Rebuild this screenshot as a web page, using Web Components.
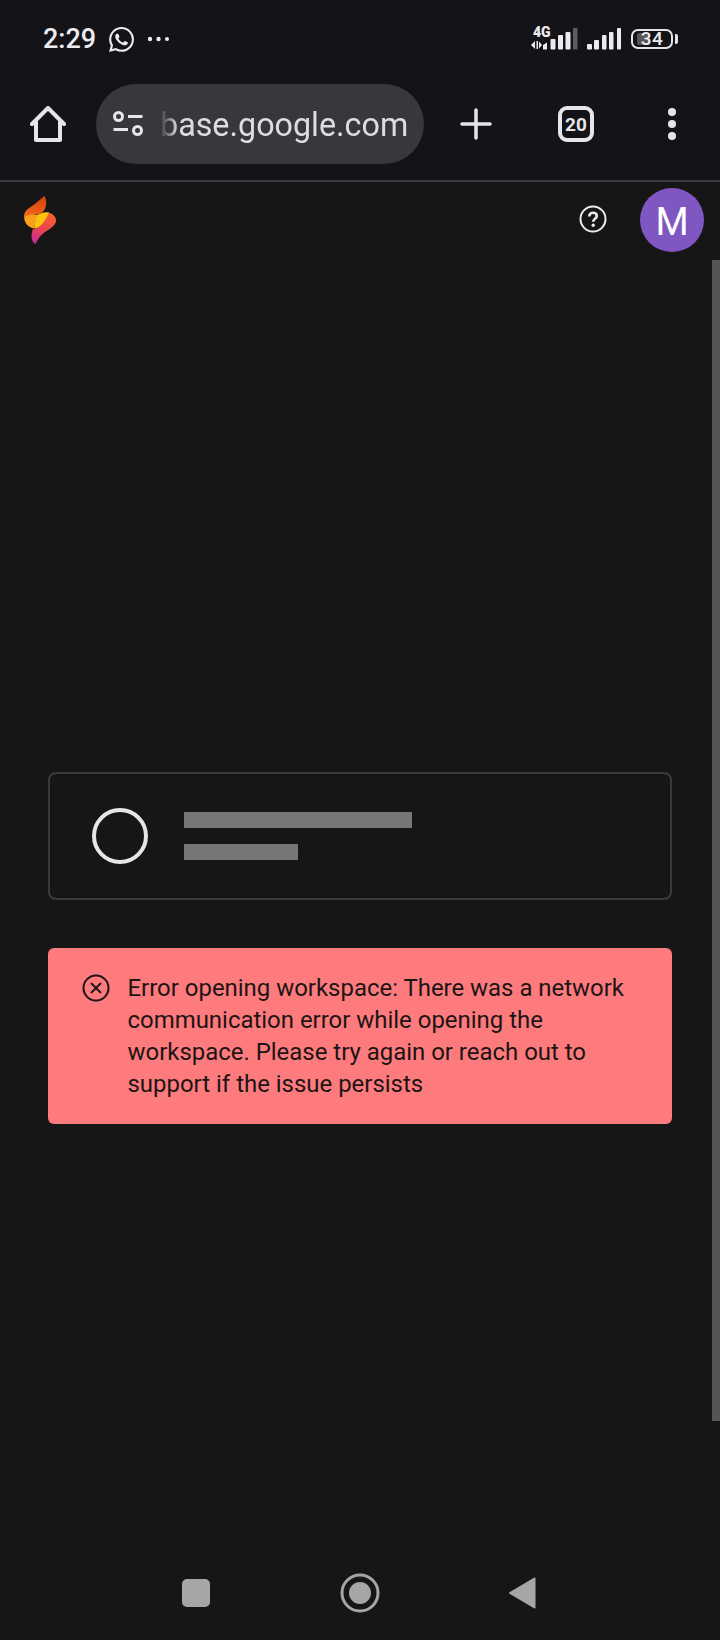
<!DOCTYPE html>
<html>
<head>
<meta charset="utf-8">
<title>Workspace</title>
<style>
  html, body { margin: 0; padding: 0; background: #161616; }
  body { font-family: Roboto, "Liberation Sans", sans-serif; }
</style>
</head>
<body>
<phone-shell>
  <status-bar slot="top"></status-bar>
  <browser-toolbar slot="top" url="base.google.com" tabs="20"></browser-toolbar>
  <app-header initial="M"></app-header>
  <workspace-page>
    <loading-card></loading-card>
    <error-banner>Error opening workspace: There was a network communication error while opening the workspace. Please try again or reach out to support if the issue persists</error-banner>
  </workspace-page>
  <nav-bar slot="bottom"></nav-bar>
</phone-shell>

<script>
class PhoneShell extends HTMLElement {
  constructor() {
    super()
    this.attachShadow({ mode: 'open' })
    this.shadowRoot.innerHTML = `
      <style>
        :host {
          display: flex;
          flex-direction: column;
          width: 720px;
          height: 1640px;
          overflow: hidden;
          position: relative;
          background: #161616;
        }
        main { flex: 1; display: flex; flex-direction: column; min-height: 0; }
        .scroll {
          position: absolute;
          right: 0;
          top: 260px;
          width: 8px;
          height: 1161px;
          background: #555;
        }
      </style>
      <slot name="top"></slot>
      <main><slot></slot></main>
      <slot name="bottom"></slot>
      <div class="scroll"></div>
    `
  }
}

class StatusBar extends HTMLElement {
  constructor() {
    super()
    this.attachShadow({ mode: 'open' })
    this.shadowRoot.innerHTML = `
      <style>
        :host {
          display: flex;
          align-items: center;
          height: 78px;
          padding: 0 43px;
          background: #131318;
          color: #ececf0;
          box-sizing: border-box;
        }
        .time { font-size: 27px; font-weight: 500; width: 66px; white-space: nowrap; }
        .wa { width: 25px; height: 25px; display: block; }
        .more { width: 22px; height: 6px; margin-left: 13px; display: block; }
        .right { margin-left: auto; display: flex; align-items: center; margin-right: -1px; }
        .signal { width: 92px; height: 34px; display: block; }
        .batt {
          margin-left: 10px;
          width: 42px;
          height: 20px;
          box-sizing: border-box;
          border: 2px solid #e4e4e8;
          border-radius: 7px;
          display: flex;
          align-items: center;
          justify-content: center;
          position: relative;
          font-size: 19px;
          font-weight: 500;
          line-height: 16px;
        }
        .batt i {
          position: absolute;
          left: 4px;
          top: 2px;
          width: 13px;
          height: 12px;
          border-radius: 2px;
          background: #55555a;
        }
        .batt span { position: relative; letter-spacing: .5px; }
        .nub { width: 3px; height: 10px; margin-left: 2px; background: #e4e4e8; border-radius: 0 2px 2px 0; }
      </style>
      <span class="time">2:29</span>
      <svg class="wa" viewBox="0 0 24 24" fill="#ececf0"><path d="M17.472 14.382c-.297-.149-1.758-.867-2.03-.967-.273-.099-.471-.148-.67.15-.197.297-.767.966-.94 1.164-.173.199-.347.223-.644.075-.297-.15-1.255-.463-2.39-1.475-.883-.788-1.48-1.761-1.653-2.059-.173-.297-.018-.458.13-.606.134-.133.298-.347.446-.52.149-.174.198-.298.298-.497.099-.198.05-.371-.025-.52-.075-.149-.669-1.612-.916-2.207-.242-.579-.487-.5-.669-.51-.173-.008-.371-.01-.57-.01-.198 0-.52.074-.792.372-.272.297-1.04 1.016-1.04 2.479 0 1.462 1.065 2.875 1.213 3.074.149.198 2.096 3.2 5.077 4.487.709.306 1.262.489 1.694.625.712.227 1.36.195 1.871.118.571-.085 1.758-.719 2.006-1.413.248-.694.248-1.289.173-1.413-.074-.124-.272-.198-.57-.347m-5.421 7.403h-.004a9.87 9.87 0 01-5.031-1.378l-.361-.214-3.741.982.998-3.648-.235-.374a9.86 9.86 0 01-1.51-5.26c.001-5.45 4.436-9.884 9.888-9.884 2.64 0 5.122 1.03 6.988 2.898a9.825 9.825 0 012.893 6.994c-.003 5.45-4.437 9.884-9.885 9.884m8.413-18.297A11.815 11.815 0 0012.05 0C5.495 0 .16 5.335.157 11.892c0 2.096.547 4.142 1.588 5.945L.057 24l6.305-1.654a11.882 11.882 0 005.683 1.448h.005c6.554 0 11.89-5.335 11.893-11.893a11.821 11.821 0 00-3.48-8.413z"/></svg>
      <svg class="more" viewBox="0 0 22 6" fill="#ececf0"><circle cx="3" cy="3" r="2.2"/><circle cx="11.5" cy="3" r="2.2"/><circle cx="20" cy="3" r="2"/></svg>
      <div class="right">
        <svg class="signal" viewBox="0 -4 92 34" fill="#ececf0">
          <text x="4" y="10.500" font-family="Roboto" font-weight="900" font-size="14">4G</text>
          <path d="M2 19l4-4v8zM7.500 15h1.500v8H7.500zM10 15.500l3 3.500-3 3.500z"/>
          <g>
            <path d="M14 19l4-2.500v7h-4z"/>
            <rect x="21.500" y="13" width="5" height="10.500" rx="1"/>
            <rect x="29" y="9" width="5" height="14.500" rx="1"/>
            <rect x="36.500" y="6" width="5" height="17.500" rx="1"/>
            <rect x="44" y="2" width="4.500" height="21.500" fill="#5d5d60"/>
            <rect x="58" y="18" width="5" height="5.500" rx="1"/>
            <rect x="65" y="14" width="5" height="9.500" rx="1"/>
            <rect x="73" y="9" width="4.500" height="14.500" rx="1"/>
            <rect x="80" y="6" width="4.500" height="17.500" rx="1"/>
            <rect x="88" y="2" width="4" height="21.500" rx="1"/>
          </g>
        </svg>
        <div class="batt"><i></i><span>34</span></div>
        <div class="nub"></div>
      </div>
    `
  }
}

class BrowserToolbar extends HTMLElement {
  constructor() {
    super()
    this.attachShadow({ mode: 'open' })
    this.shadowRoot.innerHTML = `
      <style>
        :host {
          display: flex;
          align-items: center;
          box-sizing: border-box;
          height: 104px;
          padding: 6px 0 16px 30px;
          background: #131318;
          border-bottom: 2px solid #3a3a40;
          color: #e6e6ea;
        }
        svg { display: block; flex: none; }
        .pill {
          margin-left: 30px;
          width: 328px;
          height: 80px;
          border-radius: 40px;
          background: #37373d;
          display: flex;
          align-items: center;
          padding-left: 17px;
          box-sizing: border-box;
        }
        .url {
          margin-left: 17px;
          padding-top: 2px;
          font-size: 32.300px;
          white-space: nowrap;
          color: #dcdce2;
          -webkit-mask-image: linear-gradient(90deg, transparent 0, #000 18px);
          mask-image: linear-gradient(90deg, transparent 0, #000 18px);
        }
        .plus { margin-left: 36px; }
        .tabs {
          margin-left: 66px;
          width: 36px;
          height: 36px;
          box-sizing: border-box;
          border: 4px solid #e6e6ea;
          border-radius: 9px;
          display: flex;
          align-items: center;
          justify-content: center;
          font-size: 19px;
          font-weight: 700;
          line-height: 1;
        }
        .menu { margin-left: 72px; }
      </style>
      <svg width="36" height="36" viewBox="0 0 36 36" fill="none" stroke="#e6e6ea" stroke-width="4" stroke-linejoin="round" stroke-linecap="round"><path d="M2 18L18 2l16 16M6 16v18h24V16"/></svg>
      <div class="pill">
        <svg width="30" height="26" viewBox="0 0 30 26" fill="none" stroke="#e6e6ea" stroke-width="3"><circle cx="5.500" cy="5.500" r="4"/><path d="M15 5.500h14.500M0.500 18.500H15"/><circle cx="24.500" cy="19.500" r="4"/></svg>
        <span class="url"></span>
      </div>
      <svg class="plus" width="32" height="32" viewBox="0 0 32 32" stroke="#e6e6ea" stroke-width="3.500" stroke-linecap="round"><path d="M16 2v28M2 16h28"/></svg>
      <div class="tabs"></div>
      <svg class="menu" width="12" height="36" viewBox="0 0 12 36" fill="#e6e6ea"><circle cx="6" cy="6" r="4"/><circle cx="6" cy="18" r="4"/><circle cx="6" cy="30" r="4"/></svg>
    `
  }

  connectedCallback() {
    this.shadowRoot.querySelector('.url').textContent = this.getAttribute('url')
    this.shadowRoot.querySelector('.tabs').textContent = this.getAttribute('tabs')
  }
}

class AppHeader extends HTMLElement {
  constructor() {
    super()
    this.attachShadow({ mode: 'open' })
    this.shadowRoot.innerHTML = `
      <style>
        :host {
          display: flex;
          align-items: center;
          height: 76px;
          padding: 0 16px 0 24px;
          box-sizing: border-box;
        }
        svg { display: block; flex: none; }
        .help { margin-left: auto; margin-bottom: 2px; }
        .avatar {
          margin-left: 33px;
          width: 64px;
          height: 64px;
          border-radius: 50%;
          background: #7e57c2;
          color: #fff;
          display: flex;
          align-items: center;
          justify-content: center;
          box-sizing: border-box;
          padding-top: 3px;
          font-size: 38px;
          font-weight: 400;
        }
      </style>
      <svg width="32" height="48" viewBox="0 0 32 48">
        <defs>
          <linearGradient id="top" x1="0.700" y1="0" x2="0.300" y2="1">
            <stop offset="0" stop-color="#d9420f"/><stop offset="1" stop-color="#f26a1d"/>
          </linearGradient>
          <linearGradient id="low" x1="0.700" y1="0" x2="0.300" y2="1">
            <stop offset="0" stop-color="#f4622a"/><stop offset=".55" stop-color="#ee4250"/><stop offset="1" stop-color="#c92e9a"/>
          </linearGradient>
        </defs>
        <path fill="url(#top)" d="M20.500 0C16 3 13 7 8 10C3 13 -1 17 0.200 22C5 18 12 19 16 18C22 15 24 7 20.500 0Z"/>
        <path fill="url(#low)" d="M24 16.500C29 17.500 32.500 21 32 25.500C31 30 26 33 21 36C17 38.500 14 43 11.500 48C8 46 6 41 9 33C15 33 20 26 24 16.500Z"/>
        <path fill="#f9a01b" d="M0.200 22C0.800 28 5 31.500 10 32.500C11 28 12 24 13 19C8 18 3 18.500 0.200 22Z"/>
        <path fill="#fdc20e" d="M10 32.500C16 32 21 26 25 16.500C20 15.500 15 18 12.500 19.500C11.500 24 11 28 10 32.500Z"/>
      </svg>
      <svg class="help" width="28" height="28" viewBox="0 0 28 28"><circle cx="14" cy="14" r="12.500" fill="none" stroke="#ececec" stroke-width="2"/><path d="M10.300 11.400c0-2.300 1.600-3.700 3.800-3.700 2.100 0 3.700 1.300 3.700 3.300 0 2.800-3.600 2.900-3.600 5.700" fill="none" stroke="#ececec" stroke-width="2.600"/><circle cx="14.200" cy="20.300" r="1.700" fill="#ececec"/></svg>
      <div class="avatar">M</div>
    `
  }
}

class WorkspacePage extends HTMLElement {
  constructor() {
    super()
    this.attachShadow({ mode: 'open' })
    this.shadowRoot.innerHTML = `
      <style>
        :host {
          display: flex;
          flex-direction: column;
          gap: 48px;
          flex: 1;
          padding: 514px 48px 0;
        }
      </style>
      <slot></slot>
    `
  }
}

class LoadingCard extends HTMLElement {
  constructor() {
    super()
    this.attachShadow({ mode: 'open' })
    this.shadowRoot.innerHTML = `
      <style>
        :host {
          display: flex;
          align-items: center;
          height: 128px;
          padding-left: 42px;
          box-sizing: border-box;
          border: 2px solid #3a3a3a;
          border-radius: 8px;
        }
        .ring {
          width: 56px;
          height: 56px;
          box-sizing: border-box;
          border: 4px solid #e6e6e6;
          border-radius: 50%;
          flex: none;
        }
        .lines { margin-left: 36px; display: flex; flex-direction: column; gap: 16px; }
        .lines div { height: 16px; background: #777; }
        .a { width: 228px; }
        .b { width: 114px; }
      </style>
      <div class="ring"></div>
      <div class="lines"><div class="a"></div><div class="b"></div></div>
    `
  }
}

class ErrorBanner extends HTMLElement {
  constructor() {
    super()
    this.attachShadow({ mode: 'open' })
    this.shadowRoot.innerHTML = `
      <style>
        :host {
          display: flex;
          align-items: flex-start;
          box-sizing: border-box;
          padding: 24px 32px 24px 34px;
          background: #fd7b7d;
          border-radius: 6px;
          color: #1d1415;
          font-size: 23.950px;
          line-height: 32px;
        }
        svg { flex: none; display: block; margin-top: 2px; }
        p { margin: 0 0 0 17.500px; }
      </style>
      <svg width="28" height="28" viewBox="0 0 28 28" fill="none" stroke="#1d1415" stroke-width="2"><circle cx="14" cy="14" r="12.500"/><path d="M9 9l10 10M19 9L9 19" stroke-width="1.800"/></svg>
      <p><slot></slot></p>
    `
  }
}

class NavBar extends HTMLElement {
  constructor() {
    super()
    this.attachShadow({ mode: 'open' })
    this.shadowRoot.innerHTML = `
      <style>
        :host {
          display: flex;
          align-items: center;
          height: 94px;
          padding-left: 182px;
          box-sizing: border-box;
        }
        .sq { width: 28px; height: 28px; border-radius: 5px; background: #a6a6a6; }
        svg { display: block; flex: none; }
        .home { margin-left: 130px; }
        .back { margin-left: 128px; }
      </style>
      <div class="sq"></div>
      <svg class="home" width="40" height="40" viewBox="0 0 40 40"><circle cx="20" cy="20" r="18" fill="none" stroke="#a6a6a6" stroke-width="3"/><circle cx="20" cy="20" r="11" fill="#a6a6a6"/></svg>
      <svg class="back" width="28" height="34" viewBox="0 0 28 34"><path d="M26.500 2.500v29L2 17z" fill="#a6a6a6" stroke="#a6a6a6" stroke-width="2" stroke-linejoin="round"/></svg>
    `
  }
}

customElements.define('phone-shell', PhoneShell)
customElements.define('status-bar', StatusBar)
customElements.define('browser-toolbar', BrowserToolbar)
customElements.define('app-header', AppHeader)
customElements.define('workspace-page', WorkspacePage)
customElements.define('loading-card', LoadingCard)
customElements.define('error-banner', ErrorBanner)
customElements.define('nav-bar', NavBar)
</script>
</body>
</html>
